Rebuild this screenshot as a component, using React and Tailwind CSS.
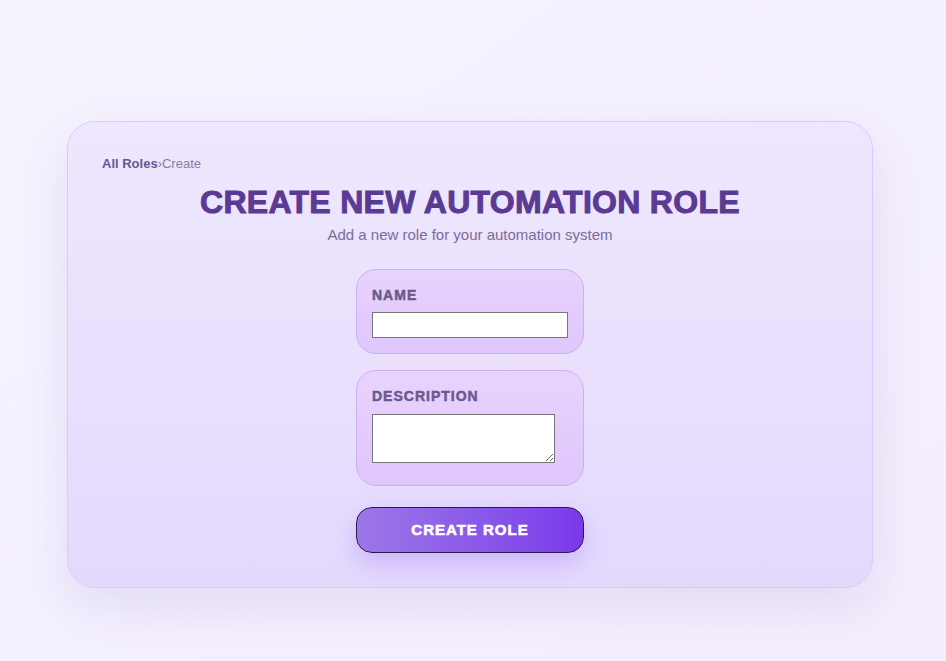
export default function App() {
  return (
    <div
      className="min-h-screen w-full bg-gradient-to-br from-[#f6f3fe] via-[#f4f0fe] to-[#f4edfc] pt-[121px] pb-[73px]"
      style={{ fontFamily: '"Liberation Sans", Arial, sans-serif' }}
    >
      <div className="ml-[67px] w-[806px] rounded-[28px] border border-[#d8cbf7] bg-gradient-to-b from-[#efe7fe] to-[#e4d9fd] px-[34px] pt-[34px] pb-[34px] shadow-[0_18px_50px_rgba(110,70,190,0.12)]">
        {/* breadcrumb */}
        <div className="flex items-center text-[13px] leading-4">
          <span className="font-bold text-[#67578f]">All Roles</span>
          <span className="text-[#8a7ba8]">›</span>
          <span className="text-[#8a7ba8]">Create</span>
        </div>

        <h1 className="mt-[11px] text-center text-[32px] font-black leading-[38px] tracking-[0.3px] text-[#5b3a93] [-webkit-text-stroke:1px_#5b3a93]">
          CREATE NEW AUTOMATION ROLE
        </h1>
        <p className="mt-[5px] text-center text-[15px] leading-[18px] text-[#7c6c9c]">
          Add a new role for your automation system
        </p>

        <form className="mt-[25px] flex flex-col items-center" onSubmit={(e) => e.preventDefault()}>
          <div className="w-[228px] rounded-[20px] border border-[#cfaef3] bg-gradient-to-b from-[#e8d3fd] to-[#dfc6fd] p-[15px]">
            <label className="block text-[14px] font-black leading-5 tracking-[1px] text-[#6a5a8c] [-webkit-text-stroke:0.5px_#6a5a8c]">
              NAME
            </label>
            <input
              type="text"
              className="mt-[7px] block h-[26px] w-[196px] border border-[#767676] bg-white px-[2px] text-[13px]"
            />
          </div>

          <div className="mt-4 w-[228px] rounded-[20px] border border-[#cfaef3] bg-gradient-to-b from-[#e8d3fd] to-[#dfc6fd] px-[15px] pt-[15px] pb-[22px]">
            <label className="block text-[14px] font-black leading-5 tracking-[1px] text-[#6a5a8c] [-webkit-text-stroke:0.5px_#6a5a8c]">
              DESCRIPTION
            </label>
            <textarea
              rows={2}
              className="mt-2 block h-[49px] w-[183px] resize border border-[#767676] bg-white px-[2px] text-[13px]"
            />
          </div>

          <button
            type="submit"
            className="mt-[21px] h-[46px] w-[228px] rounded-[16px] border border-[#2a1d45] bg-gradient-to-r from-[#9d76e8] to-[#7b38ea] text-[15px] font-black tracking-[1px] text-white [-webkit-text-stroke:0.6px_#ffffff] shadow-[0_10px_24px_rgba(140,90,240,0.28)]"
          >
            CREATE ROLE
          </button>
        </form>
      </div>
    </div>
  );
}
